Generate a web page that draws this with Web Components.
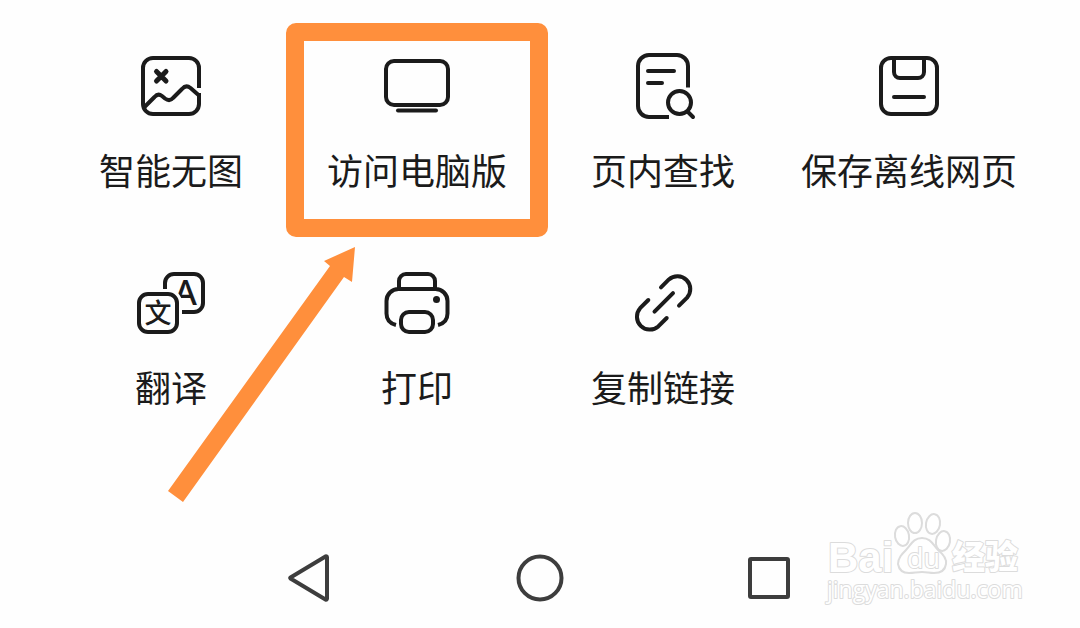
<!DOCTYPE html>
<html lang="zh-CN">
<head>
<meta charset="utf-8">
<meta name="viewport" content="width=device-width, initial-scale=1">
<title>浏览器菜单</title>
<style>
body { margin: 0; background: #fefefe; color: #1b1b1b; font-family: "Noto Sans CJK SC", sans-serif; }
</style>
</head>
<body>
<browser-menu></browser-menu>

<script>
const define = (name, html) => {
  const template = document.createElement('template');
  template.innerHTML = html;
  customElements.define(name, class extends HTMLElement {
    constructor() {
      super();
      this.attachShadow({ mode: 'open' }).append(template.content.cloneNode(true));
    }
  });
};

define('menu-tile', `
<style>
  :host { display: block; position: relative; }
  button { display: flex; flex-direction: column; align-items: center; gap: 20px; width: 100%; margin: 0; padding: 0; border: 0; background: none; color: inherit; font: 400 36px/46px "Noto Sans CJK SC", sans-serif; white-space: nowrap; cursor: pointer; }
  ::slotted(svg) { display: block; width: 80px; height: 80px; fill: none; stroke: currentColor; stroke-width: 4px; stroke-linecap: round; stroke-linejoin: round; }
</style>
<button type="button"><slot name="icon"></slot><span><slot></slot></span></button>
<slot name="mark"></slot>`);

define('highlight-mark', `
<style>
  :host { position: absolute; inset: -23px -8px -45px; pointer-events: none; }
  .frame { height: 100%; box-sizing: border-box; border: 18px solid #ff8f3c; border-radius: 10px; }
  svg { position: absolute; right: 100%; top: 100%; margin: 10px -70px 0 0; width: 188px; height: 256px; fill: #ff8f3c; }
</style>
<div class="frame"></div>
<svg viewBox="0 0 188 256" aria-hidden="true"><path d="M187 0 156 14l6 5L0 244l15 11L176 30l8 5z"/></svg>`);

define('nav-bar', `
<style>
  :host { display: block; }
  nav { display: grid; grid-template-columns: repeat(3, 1fr); justify-items: center; width: 64%; margin: 0 auto; }
  button { display: block; margin: 0; padding: 0; border: 0; background: none; color: #3d3d3d; }
  svg { display: block; width: 60px; height: 60px; fill: none; stroke: currentColor; stroke-width: 4px; stroke-linejoin: round; }
</style>
<nav aria-label="系统导航">
  <button type="button" aria-label="返回"><svg viewBox="0 0 60 60"><path d="M10.5 29.5Q10 30 10.5 30.5L45.500 51.500Q47 52 47 50.500V9.500Q47 8 45.500 8.500Z"/></svg></button>
  <button type="button" aria-label="主页"><svg viewBox="0 0 60 60"><circle cx="30" cy="30" r="21.500"/></svg></button>
  <button type="button" aria-label="最近任务"><svg viewBox="0 0 60 60"><rect x="10" y="11" width="38" height="38" rx="1"/></svg></button>
</nav>`);

define('site-watermark', `
<style>
  :host { display: block; pointer-events: none; }
  svg { display: block; width: 210px; height: 110px; fill: #fff; stroke: #dcdcdc; stroke-width: 2px; stroke-linejoin: round; }
  text { paint-order: stroke; }
  .latin { font: 700 42px "Liberation Sans", sans-serif; }
  .du { font: 400 27px "Open Sans", sans-serif; }
  .cjk { font: 900 33px "Noto Sans CJK SC", sans-serif; }
  .url { font: 400 23px "Open Sans", sans-serif; }
</style>
<svg viewBox="0 0 210 110">
  <ellipse cx="82" cy="31" rx="7" ry="10" transform="rotate(-10 82 31)"/>
  <ellipse cx="95" cy="18" rx="7" ry="10"/>
  <ellipse cx="113" cy="19" rx="7" ry="10" transform="rotate(10 113 19)"/>
  <ellipse cx="123" cy="36" rx="7" ry="10" transform="rotate(10 123 36)"/>
  <path d="M102 33c9 0 11 7 16 12 5 4 9 8 8 14-1 7-6 9-12 9-5 0-7-1-12-1s-8 1-13 1c-6 0-10-3-11-9 0-6 4-10 8-14 5-5 7-12 16-12z"/>
  <text class="latin" x="8" y="67">Bai</text>
  <text class="du" x="87" y="63">du</text>
  <text class="cjk" x="132" y="64">经验</text>
  <text class="url" x="7" y="93">jingyan.baidu.com</text>
</svg>`);

define('browser-menu', `
<style>
  :host { display: flex; flex-direction: column; position: relative; box-sizing: border-box; min-height: 100vh; padding: 46px 0 20px; overflow: hidden; }
  main { display: grid; grid-template-columns: repeat(4, 1fr); row-gap: 71px; padding: 0 48px; }
  nav-bar { margin-top: auto; }
  site-watermark { position: absolute; right: 50px; bottom: 13px; }
  text { fill: currentColor; stroke: none; }
</style>
<main>
  <menu-tile>
    <svg slot="icon" viewBox="0 0 80 80" aria-hidden="true"><path style="stroke-linecap:butt" d="M68 42V22a10 10 0 0 0-10-10H22a10 10 0 0 0-10 10v36a10 10 0 0 0 10 10h36a10 10 0 0 0 10-10V47"/><path d="M13.500 61 23.500 51Q27 47 31 50L34 52.500Q38.500 56 42 52L51 43Q55 38.500 59.500 42L67.500 49"/><path style="stroke-width:5px" d="M25.500 25.500l9.500 9.500M35 25.500 25.500 35"/></svg>智能无图
  </menu-tile>
  <menu-tile>
    <svg slot="icon" viewBox="0 0 80 80" aria-hidden="true"><rect x="9" y="15" width="62" height="44" rx="8"/><path d="M21 64.500h38"/></svg>访问电脑版
    <highlight-mark slot="mark"></highlight-mark>
  </menu-tile>
  <menu-tile>
    <svg slot="icon" viewBox="0 0 80 80" aria-hidden="true"><path style="stroke-linecap:butt" d="M65 41.500V20A11 11 0 0 0 54 9H26a11 11 0 0 0-11 11v40a11 11 0 0 0 11 11h20"/><path d="M25 25h26M25 37h14M64.500 65.500 70 71"/><circle cx="56.500" cy="56.500" r="11.500"/></svg>页内查找
  </menu-tile>
  <menu-tile>
    <svg slot="icon" viewBox="0 0 80 80" aria-hidden="true"><rect x="12" y="12" width="56" height="56" rx="10"/><path d="M25 12v14a6 6 0 0 0 6 6h18a6 6 0 0 0 6-6V12M25 51h30"/></svg>保存离线网页
  </menu-tile>
  <menu-tile>
    <svg slot="icon" viewBox="0 0 80 80" aria-hidden="true"><rect x="34" y="11" width="38" height="38" rx="9"/><text x="43" y="42" font-family="Noto Sans, sans-serif" font-weight="500" font-size="35">A</text><rect x="8" y="31" width="38" height="38" rx="9" style="fill:#fefefe;stroke:#fefefe;stroke-width:10px"/><rect x="8" y="31" width="38" height="38" rx="9"/><text x="27" y="60" text-anchor="middle" font-family="Noto Sans CJK SC, sans-serif" font-weight="500" font-size="27">文</text></svg>翻译
  </menu-tile>
  <menu-tile>
    <svg slot="icon" viewBox="0 0 80 80" aria-hidden="true"><path style="stroke-linecap:butt" d="M22 26v-8a7 7 0 0 1 7-7h22a7 7 0 0 1 7 7v8M19 62C13 60.500 9.500 56.500 9.500 50.500V38a12 12 0 0 1 12-12h37a12 12 0 0 1 12 12v12.500C70.500 56.500 67 60.500 61 62"/><rect x="24" y="49" width="32" height="20" rx="8"/><circle cx="59.500" cy="36.500" r="3.500" style="fill:currentColor;stroke:none"/></svg>打印
  </menu-tile>
  <menu-tile>
    <svg slot="icon" viewBox="0 0 80 80" aria-hidden="true"><path d="M38 24.300 45.900 16.400A12.900 12.900 0 0 1 64.100 34.600L56 42.700M31.500 48.700 50 30.200M25.300 37 17.100 45.200A12.900 12.900 0 0 0 35.300 63.400L43.700 55"/></svg>复制链接
  </menu-tile>
</main>
<nav-bar></nav-bar>
<site-watermark></site-watermark>`);
</script>
</body>
</html>
